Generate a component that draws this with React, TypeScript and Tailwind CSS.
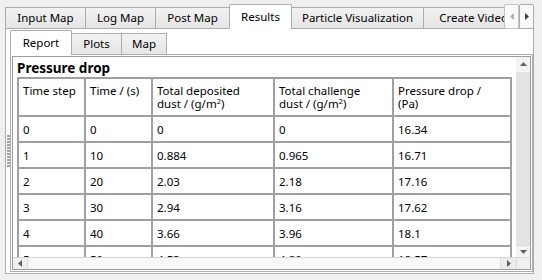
import React from "react";

type Tab = { label: string; w: string; selected?: boolean; noLeft?: boolean; right?: boolean };

const outerTabs: Tab[] = [
  { label: "Input Map", w: "w-[80px]" },
  { label: "Log Map", w: "w-[70px]" },
  { label: "Post Map", w: "w-[74px]" },
  { label: "Results", w: "w-[63px]", selected: true },
  { label: "Particle Visualization", w: "w-[131px]", noLeft: true },
  { label: "Create Video", w: "w-[100px]" },
];

const innerTabs: Tab[] = [
  { label: "Report", w: "w-[62px]", selected: true },
  { label: "Plots", w: "w-[49px]", noLeft: true },
  { label: "Map", w: "w-[46px]", right: true },
];

function TabItem({ t }: { t: Tab }) {
  if (t.selected) {
    return (
      <div
        className={`${t.w} relative z-10 h-[25px] shrink-0 border-t border-l border-r border-[#adadad] bg-white flex justify-center pt-[5px] leading-[14px] whitespace-nowrap rounded-t-[2px]`}
      >
        {t.label}
      </div>
    );
  }
  return (
    <div
      className={`${t.w} mt-[3px] h-[21px] shrink-0 border-t ${t.noLeft ? "" : "border-l"} ${
        t.right ? "border-r" : ""
      } border-[#adadad] bg-linear-to-b from-[#f2f2f2] to-[#e5e5e5] flex justify-center pt-[3px] leading-[14px] whitespace-nowrap`}
    >
      {t.label}
    </div>
  );
}

const Up = () => (
  <svg width="7" height="4" viewBox="0 0 7 4">
    <polygon points="0,4 3.5,0 7,4" fill="#606060" />
  </svg>
);
const Down = () => (
  <svg width="7" height="4" viewBox="0 0 7 4">
    <polygon points="0,0 3.5,4 7,0" fill="#606060" />
  </svg>
);
const Left = ({ c = "#606060" }: { c?: string }) => (
  <svg width="4" height="7" viewBox="0 0 4 7">
    <polygon points="4,0 0,3.5 4,7" fill={c} />
  </svg>
);
const Right = ({ c = "#606060" }: { c?: string }) => (
  <svg width="4" height="7" viewBox="0 0 4 7">
    <polygon points="0,0 4,3.5 0,7" fill={c} />
  </svg>
);

const rows: string[][] = [
  ["0", "0", "0", "0", "16.34"],
  ["1", "10", "0.884", "0.965", "16.71"],
  ["2", "20", "2.03", "2.18", "17.16"],
  ["3", "30", "2.94", "3.16", "17.62"],
  ["4", "40", "3.66", "3.96", "18.1"],
  ["5", "50", "4.53", "4.80", "18.57"],
  ["6", "60", "5.31", "5.59", "19.05"],
];

const cell = "border-r-2 border-b-2 border-[#a0a0a0] pl-[4px] leading-[13px] whitespace-nowrap";

export default function App() {
  return (
    <div className="relative w-[542px] h-[280px] overflow-hidden bg-[#f0f0f0] pt-[4px] pl-[5px] font-['Noto_Sans',sans-serif] text-[11.5px] text-black">
      {/* outer tab bar */}
      <div className="flex items-start h-[25px] w-[500px] overflow-hidden">
        {outerTabs.map((t) => (
          <TabItem key={t.label} t={t} />
        ))}
      </div>
      {/* tab scroll buttons */}
      <div className="absolute left-[504px] top-[4px] flex">
        <div className="w-[15px] h-[25px] rounded-[2px] border border-[#c4c4c4] bg-[#fafafa] flex items-center justify-center">
          <Left c="#b0b0b0" />
        </div>
        <div className="w-[15px] h-[25px] rounded-[2px] border border-[#adadad] bg-[#fafafa] flex items-center justify-center">
          <Right c="#404040" />
        </div>
      </div>

      {/* outer pane */}
      <div className="-mt-px w-[529px] h-[246px] border border-[#adadad] bg-white flex">
        {/* splitter grip */}
        <div className="w-[4px] flex flex-col justify-center items-end gap-[1px]">
          {Array.from({ length: 11 }).map((_, i) => (
            <div key={i} className="w-[3px] h-[2px] bg-[#a3a3a3]" />
          ))}
        </div>
        {/* inner tab widget */}
        <div className="flex-1 flex flex-col pt-[1px]">
          <div className="flex items-start h-[25px]">
            {innerTabs.map((t) => (
              <TabItem key={t.label} t={t} />
            ))}
          </div>
          <div className="-mt-px h-[218px] border border-[#adadad] bg-white p-px">
            <div className="h-full border border-[#9c9c9c] grid grid-cols-[503px_14px] grid-rows-[200px_12px]">
              {/* viewport */}
              <div className="overflow-hidden bg-white pl-[4px] pt-[3px]">
                <div className="font-bold text-[13.5px] leading-[16px]">Pressure drop</div>
                <div className="mt-[1px] w-[495px] grid grid-cols-[67px_67px_122px_119px_118px] border-t-2 border-l-2 border-[#a0a0a0]">
                  <div className={`${cell} pt-[5px] pb-[5px]`}>Time step</div>
                  <div className={`${cell} pt-[5px] pb-[5px]`}>Time / (s)</div>
                  <div className={`${cell} pt-[5px] pb-[5px]`}>
                    Total deposited
                    <br />
                    dust / (g/m<sup className="text-[7.5px]">2</sup>)
                  </div>
                  <div className={`${cell} pt-[5px] pb-[5px]`}>
                    Total challenge
                    <br />
                    dust / (g/m<sup className="text-[7.5px]">2</sup>)
                  </div>
                  <div className={`${cell} pt-[5px] pb-[5px]`}>
                    Pressure drop /
                    <br />
                    (Pa)
                  </div>
                  {rows.map((r, i) =>
                    r.map((v, j) => (
                      <div key={`${i}-${j}`} className={`${cell} pt-[6px] pb-[5px]`}>
                        {v}
                      </div>
                    ))
                  )}
                </div>
              </div>
              {/* vertical scrollbar */}
              <div className="flex flex-col bg-[#f0f0f0]">
                <div className="h-[14px] flex items-center justify-center bg-[#f3f3f3]">
                  <Up />
                </div>
                <div className="flex-1 bg-[#e4e4e4] border-t border-[#f8f8f8]" />
                <div className="h-[12px] flex items-center justify-center bg-[#f3f3f3] border-t border-[#dadada]">
                  <Down />
                </div>
              </div>
              {/* horizontal scrollbar */}
              <div className="flex bg-[#f0f0f0] border-t border-[#d6d6d6]">
                <div className="w-[14px] flex items-center justify-center">
                  <Left />
                </div>
                <div className="flex-1 bg-[#f8f8f8] border-x border-[#dcdcdc]" />
                <div className="w-[15px] flex items-center justify-center bg-[#ececec]">
                  <Right />
                </div>
              </div>
              {/* corner */}
              <div className="bg-[#f0f0f0] border-t border-l border-[#dcdcdc]" />
            </div>
          </div>
        </div>
      </div>
    </div>
  );
}
